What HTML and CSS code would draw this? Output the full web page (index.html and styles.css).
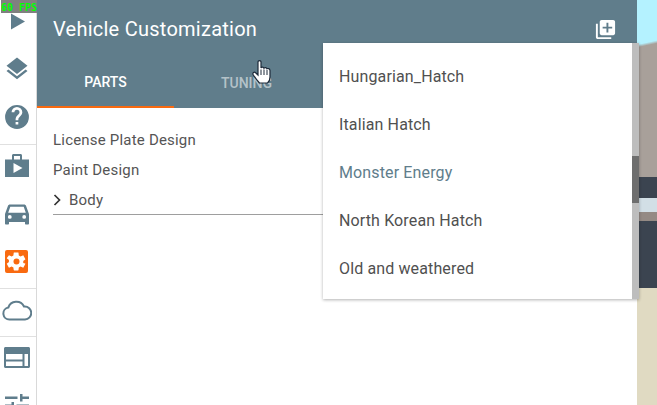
FILE: index.html
```html
<!DOCTYPE html>
<html lang="en">
<head>
<meta charset="utf-8">
<title>Vehicle Customization</title>
<link rel="stylesheet" href="styles.css">
</head>
<body>
<div class="fps">60 FPS</div>
<nav class="rail">
  <div class="slot s-play"><svg width="18" height="20" viewBox="0 0 18 20"><path d="M2 1.500 16 9.500 2 17.500Z" fill="#5f7d8c"/></svg></div>
  <div class="slot s-layers"><svg width="24" height="25" viewBox="0 0 24 24"><path d="M12 1 1.500 9.200 3.400 10.700 12 17.400 20.600 10.700 22.500 9.200Z M12 19.700 3.400 13 1.500 14.500 12 22.700 22.500 14.500 20.600 13Z" fill="#5f7d8c"/></svg></div>
  <div class="slot s-help"><svg width="26" height="26" viewBox="0 0 24 24"><path d="M12 1a11 11 0 1 0 0 22 11 11 0 0 0 0-22Zm1.200 18h-2.500v-2.500h2.500Zm2.400-8.300-1 1.100c-.9.800-1.400 1.500-1.400 3.200h-2.500v-.6c0-1.400.5-2.600 1.400-3.500l1.500-1.600c.5-.4.700-1 .7-1.600a2.300 2.300 0 0 0-4.700 0H7a4.900 4.900 0 0 1 9.900 0c0 1.100-.5 2.100-1.300 3Z" fill="#5f7d8c"/></svg></div>
  <div class="slot s-case"><svg width="26" height="26" viewBox="0 0 26 26"><path d="M1 7.500h7V3.500C8 2.500 8.800 2 9.500 2h7c.8 0 1.500.5 1.500 1.500v4h7v17.500H1ZM10 4v3.500h6V4Z" fill="#5f7d8c" fill-rule="evenodd"/><path d="M9.500 11 18.500 16 9.500 21Z" fill="#fff"/></svg></div>
  <div class="slot s-car"><svg width="24" height="22" viewBox="0 0 24 22"><path d="M5 1.500h14c1 0 1.800.6 2.100 1.400L24 11v9.500c0 .6-.5 1-1 1h-2c-.6 0-1-.4-1-1V19H4v1.500c0 .6-.4 1-1 1H1c-.5 0-1-.4-1-1V11L2.900 2.900C3.200 2.100 4 1.500 5 1.500Zm.3 2.300L3.200 9.800h17.600l-2.100-6ZM4.800 12a1.900 1.900 0 1 0 0 3.800 1.900 1.900 0 0 0 0-3.800Zm14.400 0a1.900 1.900 0 1 0 0 3.800 1.900 1.900 0 0 0 0-3.800Z" fill="#5f7d8c" fill-rule="evenodd"/></svg></div>
  <div class="slot s-gear"><svg width="23" height="23" viewBox="0 0 23 23"><rect width="23" height="23" rx="2" fill="#f96a10"/><path d="M17.700 12.500c.1-.3.100-.7.100-1s0-.7-.1-1l2-1.500c.2-.1.200-.4.100-.6l-1.900-3.300c-.1-.2-.4-.3-.6-.2l-2.300 1c-.5-.4-1.100-.7-1.700-1l-.3-2.500c0-.2-.2-.4-.5-.4H8.700c-.2 0-.4.200-.5.400l-.3 2.500c-.6.300-1.100.6-1.700 1l-2.300-1c-.2-.1-.5 0-.6.200L1.400 7.400c-.1.200-.1.500.1.600l2 1.500c-.1.300-.1.700-.1 1s0 .7.100 1l-2 1.500c-.2.100-.2.400-.1.600l1.900 3.300c.1.200.4.300.6.200l2.300-1c.5.400 1.100.7 1.700 1l.3 2.500c.1.200.3.400.5.400h3.800c.3 0 .5-.2.500-.4l.3-2.500c.6-.3 1.200-.6 1.700-1l2.300 1c.2.100.5 0 .6-.2l1.900-3.300c.1-.2.100-.5-.1-.6Z" transform="translate(.5 .5)" fill="#fff"/><circle cx="11.500" cy="11.500" r="3" fill="#f96a10"/></svg></div>
  <div class="slot s-cloud"><svg width="30" height="22" viewBox="0 0 30 22"><path d="M7.500 20.500a6 6 0 0 1-1.200-11.900A8.500 8.500 0 0 1 22 7.500h.5a6.500 6.500 0 0 1 .5 13Z" fill="none" stroke="#5f7d8c" stroke-width="2"/></svg></div>
  <div class="slot s-panel"><svg width="26" height="21" viewBox="0 0 26 21"><path d="M1.500 0h23C25.300 0 26 .7 26 1.500v18c0 .8-.7 1.500-1.500 1.500h-23C.7 21 0 20.300 0 19.500v-18C0 .7.700 0 1.500 0ZM2 7v5.500h16.500V7Zm0 7.500V19h16.500v-4.500ZM20.500 7v12H24V7Z" fill="#5f7d8c" fill-rule="evenodd"/></svg></div>
  <div class="slot s-tune"><svg width="24" height="20" viewBox="0 0 24 20"><path d="M0 2.500h12.500V5H0ZM15 0h2.500v2.500H24V5h-6.500v2.500H15ZM6.500 8H9v8H6.500v-3H0v-2.500h6.500ZM11.500 10.500H24V13H11.500Z" fill="#5f7d8c"/></svg></div>
</nav>
<main class="panel">
  <header class="head">
    <div class="bar">
      <h1 class="title">Vehicle Customization</h1>
      <svg class="addicon" width="23" height="23" viewBox="0 0 24 24"><path d="M4 6H2v14c0 1.100.9 2 2 2h14v-2H4V6Zm16-4H8c-1.100 0-2 .9-2 2v12c0 1.100.9 2 2 2h12c1.100 0 2-.9 2-2V4c0-1.100-.9-2-2-2Zm-1 9h-4v4h-2v-4H9V9h4V5h2v4h4v2Z" fill="#fff"/></svg>
    </div>
    <div class="tabs">
      <div class="tab tab-on">PARTS</div>
      <div class="tab tab-off">TUNING</div>
    </div>
  </header>
  <ul class="tree">
    <li class="row">License Plate Design</li>
    <li class="row">Paint Design</li>
    <li class="row row-body"><svg class="chev" width="8" height="12" viewBox="0 0 8 12"><path d="M1.500 1 6.500 6 1.500 11" fill="none" stroke="#333" stroke-width="1.700"/></svg>Body</li>
  </ul>
</main>
<aside class="scene">
  <div class="sky"></div>
  <div class="wall"></div>
  <div class="dark"></div>
  <div class="glass"></div>
  <div class="brown"></div>
  <div class="dark2"></div>
  <div class="floor"></div>
</aside>
<div class="menu">
  <ul class="menu-list">
    <li class="opt">Hungarian_Hatch</li>
    <li class="opt">Italian Hatch</li>
    <li class="opt opt-on">Monster Energy</li>
    <li class="opt">North Korean Hatch</li>
    <li class="opt">Old and weathered</li>
  </ul>
  <div class="track"><div class="thumb"></div></div>
</div>
<svg class="cursor" width="20" height="24" viewBox="0 0 20 24"><path d="M6 1.700C6 .3 9 .3 9 1.700V8C9.500 6.700 11.500 6.700 12 8.200 12.700 7.200 14.500 7.300 15 8.800 15.700 8.300 17.800 8.400 18 10.500V17C18 20 16.700 22 15.500 23H7.500C6 21.500 3.200 18 1.200 14.700 .2 12.800 2.200 11.600 3.600 12.700L6 15Z" fill="#fff" stroke="#1d2a3a" stroke-width="1.200"/><path d="M9 9.500V15M12 9.500V15M15 10V15" stroke="#1d2a3a" stroke-width="1"/></svg>
</body>
</html>
```
FILE: styles.css
```css
* { box-sizing: border-box; }
html, body { margin: 0; height: 405px; overflow: hidden; }
body {
  display: flex;
  background: #fff;
  font-family: Roboto, "Liberation Sans", sans-serif;
  color: #424242;
}
.fps {
  position: absolute;
  left: 1px;
  top: 0;
  width: 36px;
  height: 13px;
  background: #808080;
  color: #00ff00;
  font: bold 10px/15px "DejaVu Sans Mono", monospace;
  white-space: nowrap;
  overflow: hidden;
}
.rail {
  flex: 0 0 37px;
  height: 405px;
  border-right: 1px solid #d9d9d9;
  overflow: hidden;
  display: flex;
  flex-direction: column;
  padding-top: 4px;
}
.slot {
  display: flex;
  justify-content: center;
  align-items: center;
  flex: none;
  padding-right: 2px;
}
.slot svg { display: block; }
.s-play { height: 35px; padding-left: 2px; }
.s-layers { height: 48px; margin-top: 5px; }
.s-help { height: 48px; margin-top: 1px; }
.s-case { height: 48px; margin-top: 3px; padding-bottom: 8px; border-top: 1px solid #e0e0e0; }
.s-car { height: 44px; }
.s-gear { height: 50px; margin-bottom: 2px; padding-right: 3px; }
.s-cloud { height: 48px; padding-bottom: 6px; border-top: 1px solid #e0e0e0; }
.s-panel { height: 48px; padding-bottom: 6px; border-top: 1px solid #e0e0e0; }
.s-tune { height: 30px; padding-top: 10px; align-items: flex-start; }
.panel { flex: 0 0 600px; height: 405px; }
.head { height: 108px; background: #607d8b; display: flex; flex-direction: column; }
.bar {
  height: 58px;
  display: flex;
  align-items: center;
  justify-content: space-between;
  padding: 0 20px 0 16px;
}
.title { margin: 0; font-size: 20px; font-weight: 400; letter-spacing: .25px; color: #fff; }
.addicon { display: block; }
.tabs { display: flex; height: 50px; }
.tab {
  width: 137px;
  display: flex;
  align-items: center;
  justify-content: center;
  font-size: 14px;
  font-weight: 500;
  color: rgba(255,255,255,.55);
}
.tab-on { color: #fff; border-bottom: 2px solid #f96a10; }
.tab-off { margin-left: 4px; }
.tree { list-style: none; margin: 0; padding: 17px 16px 0; }
.row { height: 30px; display: flex; align-items: center; font-size: 15px; letter-spacing: .2px; color: #555; }
.row-body { border-bottom: 1px solid #9e9e9e; }
.chev { margin-right: 8px; }
.scene { flex: 0 0 20px; height: 405px; display: flex; flex-direction: column; }
.sky { height: 70px; background: linear-gradient(168deg, #b4f2ff 0 60%, #a8a09a 64%); }
.wall { height: 107px; background: #a8a09a; }
.dark { height: 21px; background: #3b4450; }
.glass { height: 14px; background: #d2dfe6; }
.brown { height: 9px; background: #948a84; }
.dark2 { height: 67px; background: #3b4450; }
.floor { flex: 1; background: #e0dac2; }
.menu {
  position: absolute;
  left: 323px;
  top: 43px;
  width: 316px;
  height: 256px;
  background: #fff;
  box-shadow: 0 1px 3px rgba(0,0,0,.3);
  display: flex;
}
.menu-list { list-style: none; margin: 0; padding: 0; flex: 1; }
.opt { height: 48px; display: flex; align-items: center; padding-left: 16px; font-size: 16px; letter-spacing: .13px; color: #505050; }
.menu-list .opt:first-child { margin-top: 9px; }
.menu-list .opt-on { color: #607d8b; }
.track { width: 7px; background: #bdbdbd; position: relative; }
.thumb { position: absolute; left: 0; top: 113px; width: 7px; height: 47px; background: #6e6e6e; }
.cursor { position: absolute; left: 252px; top: 60px; }
```
